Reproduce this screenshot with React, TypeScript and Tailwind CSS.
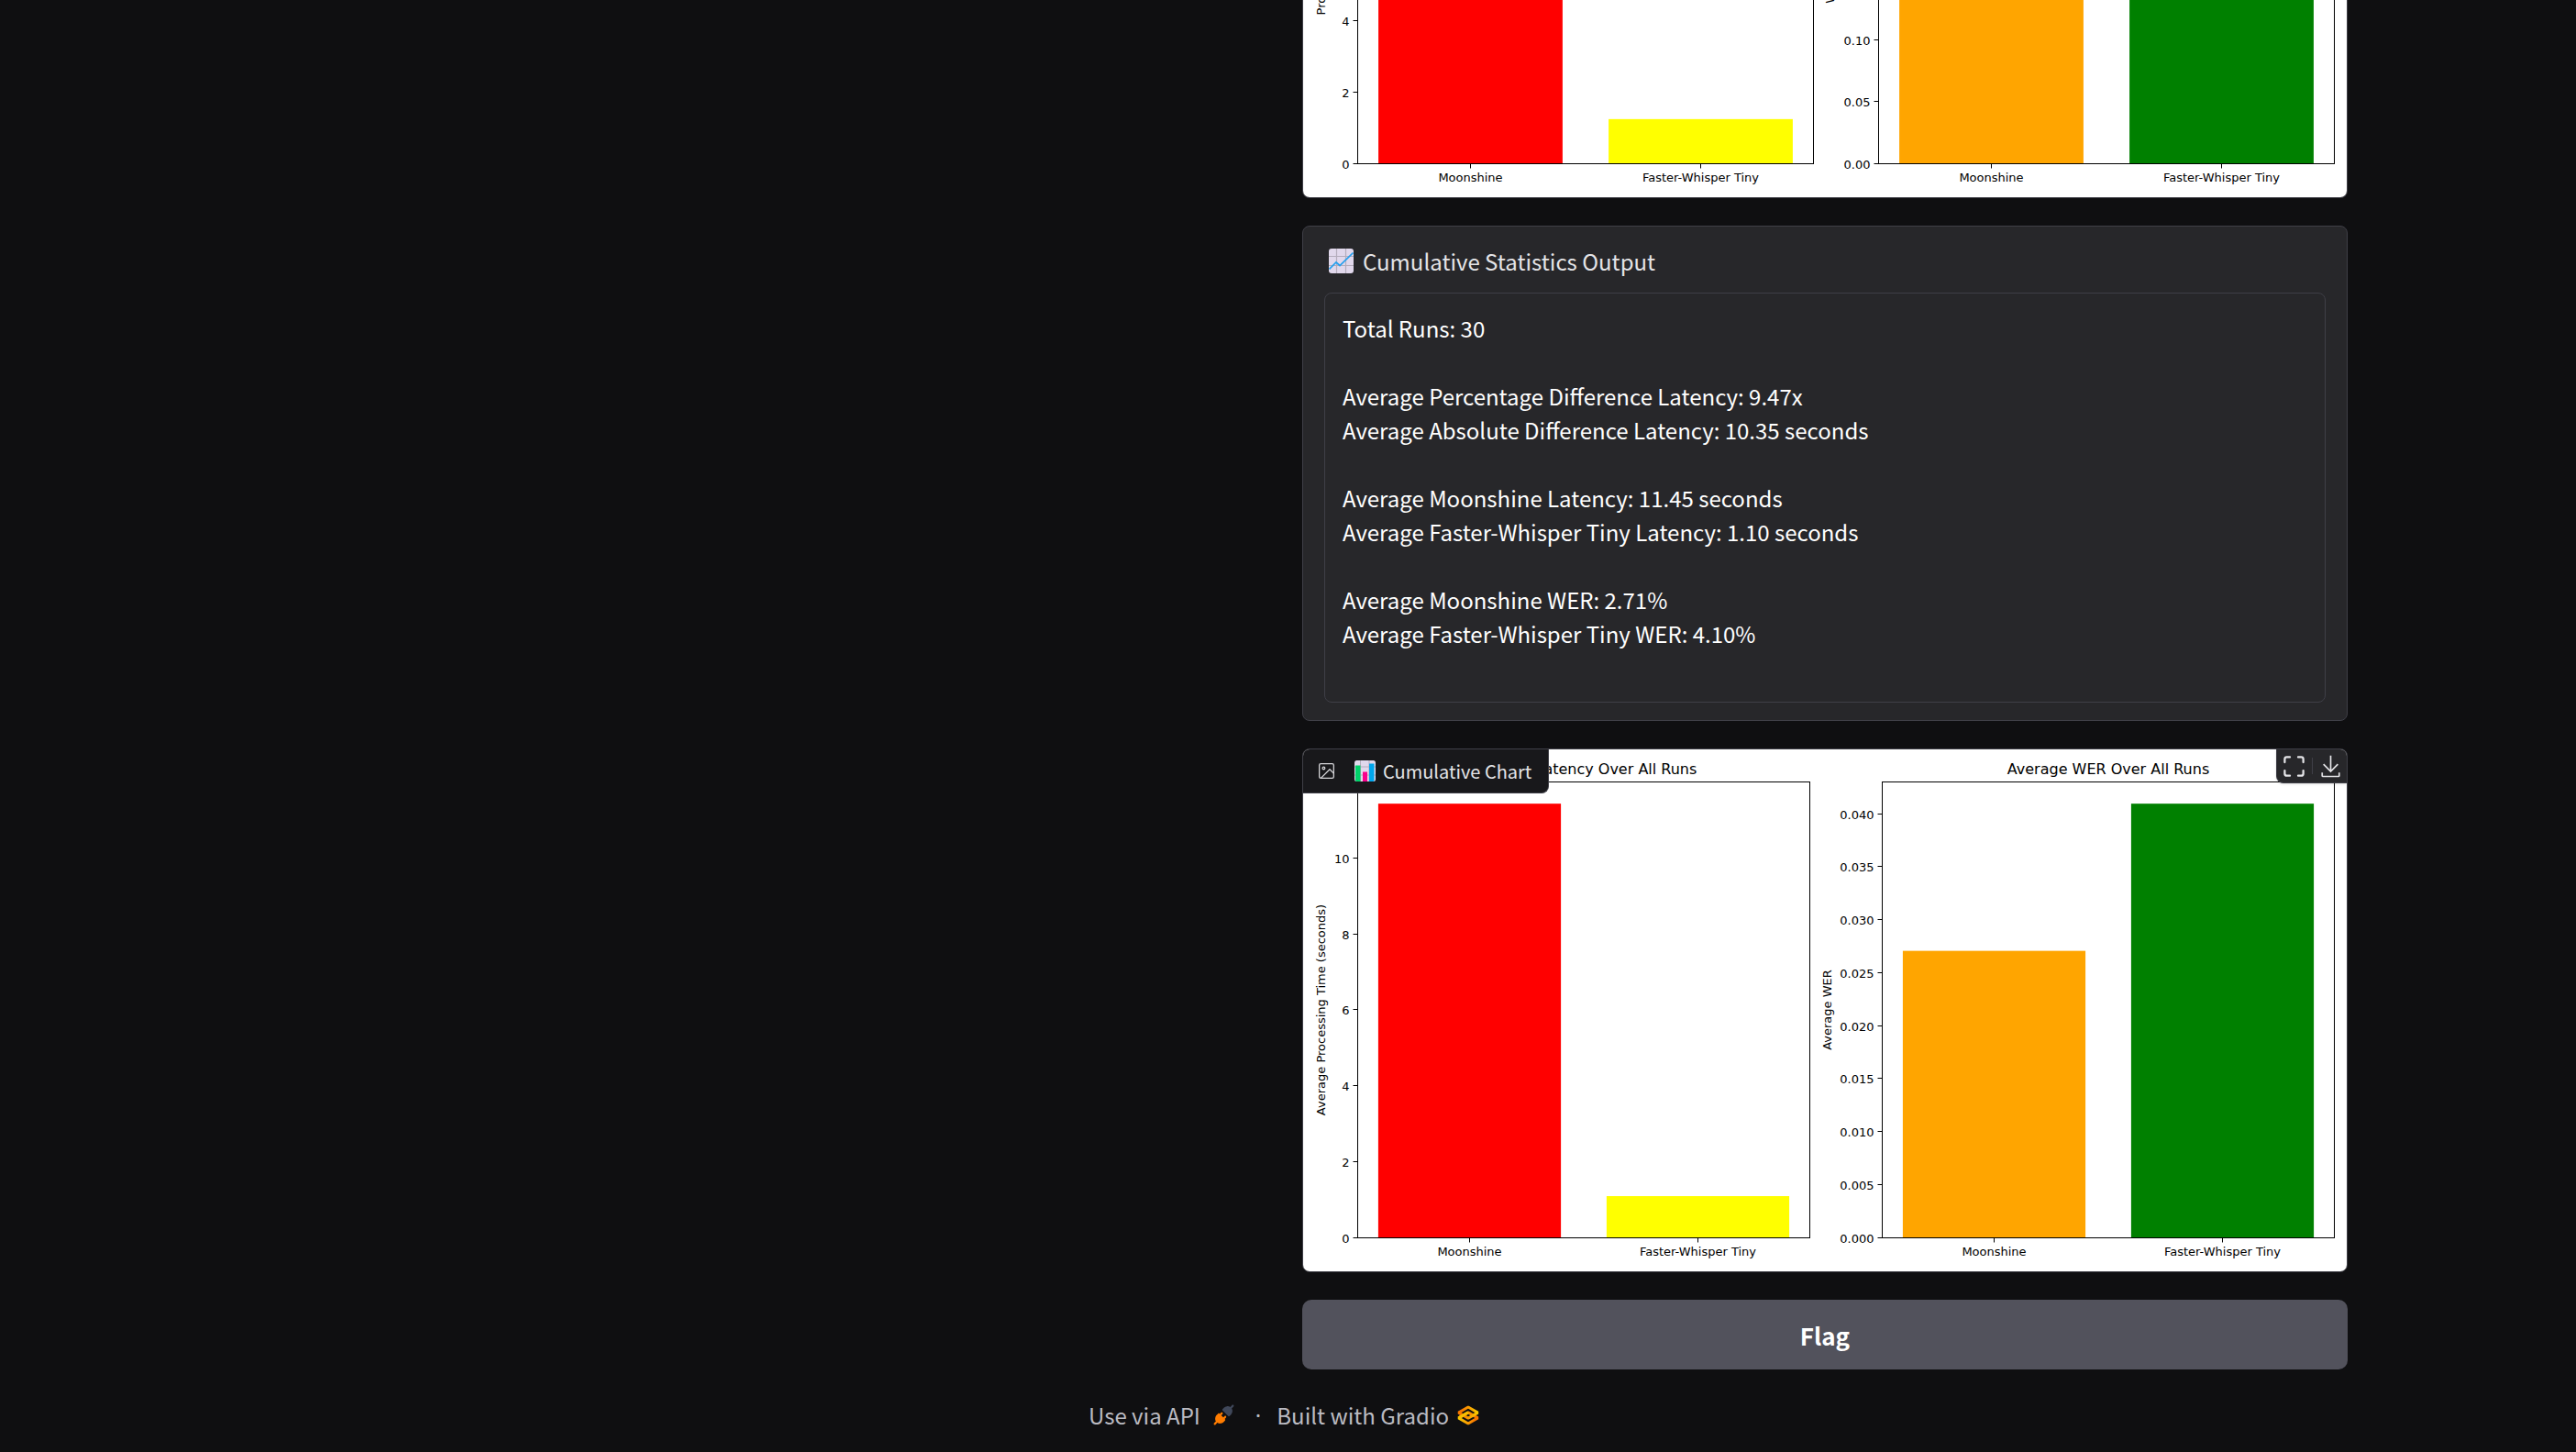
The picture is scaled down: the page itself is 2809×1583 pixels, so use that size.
import React from 'react';

type Bar = { value: number; color: string };

type Plot = {
  left: number;
  right: number;
  yLabel: string;
  yLabelX: number;
  title: string;
  step: number;
  ticks: number;
  digits: number;
  max: number;
  bars: [Bar, Bar];
};

const TOP = 35.5;
const BOTTOM = 532.5;
const CATEGORIES = ['Moonshine', 'Faster-Whisper Tiny'];

function BarPlot({ plot }: { plot: Plot }) {
  const width = plot.right - plot.left;
  const height = BOTTOM - TOP;
  const unit = width / 1.98;
  const y = (v: number) => BOTTOM - (v / plot.max) * height;
  const middle = (TOP + BOTTOM) / 2;
  return (
    <g fill="#000">
      <text x={plot.left + width / 2} y={27} textAnchor="middle" fontSize={16}>
        {plot.title}
      </text>
      <text
        transform={`translate(${plot.yLabelX} ${middle}) rotate(-90)`}
        textAnchor="middle"
        fontSize={13}
      >
        {plot.yLabel}
      </text>
      {plot.bars.map((bar, i) => (
        <rect
          key={i}
          x={plot.left + unit * (0.09 + i)}
          y={y(bar.value)}
          width={unit * 0.8}
          height={BOTTOM - y(bar.value)}
          fill={bar.color}
        />
      ))}
      {Array.from({ length: plot.ticks }, (_, i) => i * plot.step).map((v) => (
        <g key={v}>
          <path d={`M${plot.left - 5} ${Math.round(y(v)) - 0.5}H${plot.left}`} stroke="#000" />
          <text x={plot.left - 9} y={y(v) + 5} textAnchor="end" fontSize={13}>
            {v.toFixed(plot.digits)}
          </text>
        </g>
      ))}
      {CATEGORIES.map((name, i) => (
        <g key={name}>
          <path d={`M${Math.floor(plot.left + unit * (0.49 + i)) + 0.5} ${BOTTOM}v5`} stroke="#000" />
          <text x={plot.left + unit * (0.49 + i)} y={552} textAnchor="middle" fontSize={13}>
            {name}
          </text>
        </g>
      ))}
      <rect x={plot.left} y={TOP} width={width} height={height} fill="none" stroke="#000" />
    </g>
  );
}

function Chart({ label, plots }: { label: string; plots: Plot[] }) {
  return (
    <svg
      role="img"
      aria-label={label}
      viewBox="0 0 1138 569"
      className="block w-full shrink-0 bg-white font-['DejaVu_Sans',sans-serif]"
    >
      {plots.map((plot) => (
        <BarPlot key={plot.title} plot={plot} />
      ))}
    </svg>
  );
}

const runPlots: Plot[] = [
  {
    left: 59.5, right: 556.5, yLabel: 'Processing Time (seconds)', yLabelX: 24,
    title: 'Latency', step: 2, ticks: 7, digits: 0, max: 12.77,
    bars: [{ value: 12.16, color: '#ff0000' }, { value: 1.25, color: '#ffff00' }],
  },
  {
    left: 627.5, right: 1124.5, yLabel: 'Word Error Rate (WER)', yLabelX: 579,
    title: 'WER', step: 0.05, ticks: 8, digits: 2, max: 0.37,
    bars: [{ value: 0.3, color: '#ffa500' }, { value: 0.35, color: '#008000' }],
  },
];

const cumulativePlots: Plot[] = [
  {
    left: 59.5, right: 552.5, yLabel: 'Average Processing Time (seconds)', yLabelX: 24,
    title: 'Average Latency Over All Runs', step: 2, ticks: 6, digits: 0, max: 12.0225,
    bars: [{ value: 11.45, color: '#ff0000' }, { value: 1.1, color: '#ffff00' }],
  },
  {
    left: 631.5, right: 1124.5, yLabel: 'Average WER', yLabelX: 576,
    title: 'Average WER Over All Runs', step: 0.005, ticks: 9, digits: 3, max: 0.04305,
    bars: [{ value: 0.0271, color: '#ffa500' }, { value: 0.041, color: '#008000' }],
  },
];

function TrendIcon() {
  return (
    <svg viewBox="0 0 27 27" className="size-[27px]" aria-hidden="true">
      <rect width="27" height="27" rx="3" fill="#e1d8ec" />
      <path d="M8.5 0v27M18.5 0v27M0 8.5h27M0 18.5h27" stroke="#b4acbc" strokeWidth="1.2" />
      <path d="M.5 22.5 8 15l4 3.500L26.500 4.500" fill="none" stroke="#26a0ee" strokeWidth="1.700" />
    </svg>
  );
}

function BarsIcon() {
  return (
    <svg viewBox="0 0 23 23" className="size-[23px]" aria-hidden="true">
      <rect width="23" height="23" rx="2.500" fill="#e1d8ec" />
      <path d="M6.500 0v23M16 0v23M0 7h23M0 16h23" stroke="#b4acbc" />
      <path d="M1 5.500h5.500V23H2.500A1.500 1.500 0 0 1 1 21.500z" fill="#00d26a" />
      <path d="M9 12.500h5V23H9z" fill="#f8008c" />
      <path d="M16 3.500h5.500v18A1.500 1.500 0 0 1 20 23h-4z" fill="#00a6ed" />
    </svg>
  );
}

function ImageIcon() {
  return (
    <svg viewBox="0 0 24 24" className="size-[21px]" fill="none" stroke="#d4d4d8" strokeWidth="1.500" strokeLinecap="round" strokeLinejoin="round" aria-hidden="true">
      <rect x="3" y="3" width="18" height="18" rx="2" />
      <circle cx="8.500" cy="8.500" r="1.500" />
      <path d="m21 15-5-5L5 21" />
    </svg>
  );
}

function FullscreenIcon() {
  return (
    <svg viewBox="0 0 24 24" className="size-[27px]" fill="none" stroke="currentColor" strokeWidth="2" strokeLinecap="round" strokeLinejoin="round" aria-hidden="true">
      <path d="M8 3H5a2 2 0 0 0-2 2v3m18 0V5a2 2 0 0 0-2-2h-3m0 18h3a2 2 0 0 0 2-2v-3M3 16v3a2 2 0 0 0 2 2h3" />
    </svg>
  );
}

function DownloadIcon() {
  return (
    <svg viewBox="0 0 32 32" className="size-[27px]" fill="currentColor" aria-hidden="true">
      <path d="M26 24v4H6v-4H4v4a2 2 0 0 0 2 2h20a2 2 0 0 0 2-2v-4zm0-10l-1.410-1.410L17 20.170V2h-2v18.170l-7.590-7.580L6 14l10 10l10-10z" />
    </svg>
  );
}

function PlugIcon() {
  return (
    <svg viewBox="0 0 28 28" className="size-[23px]" aria-hidden="true">
      <path
        d="M26.9425 2.94265C27.4632 2.42195 27.4632 1.57773 26.9425 1.05703C26.4218 0.536329 25.5776 0.536329 25.0569 1.05703L22.5713 3.54256C21.1213 2.59333 19.5367 2.43378 18.1753 2.64006C16.5495 2.88638 15.1127 3.66838 14.3905 4.39053L12.3905 6.39053C12.1405 6.64058 12 6.97972 12 7.33334C12 7.68697 12.1405 8.0261 12.3905 8.27615L19.7239 15.6095C20.2446 16.1302 21.0888 16.1302 21.6095 15.6095L23.6095 13.6095C24.3316 12.8873 25.1136 11.4505 25.36 9.82475C25.5663 8.46312 25.4066 6.87853 24.4571 5.42858L26.9425 2.94265Z"
        fill="#3f4759"
      />
      <path
        d="M12.276 12.9426C12.7967 12.4219 12.7967 11.5777 12.276 11.057C11.7553 10.5363 10.9111 10.5363 10.3904 11.057L8.66651 12.7809L8.27615 12.3905C8.0261 12.1405 7.68697 12 7.33334 12C6.97972 12 6.64058 12.1405 6.39053 12.3905L4.39053 14.3905C3.66838 15.1127 2.88638 16.5495 2.64006 18.1753C2.43377 19.5367 2.59333 21.1214 3.54262 22.5714L1.05703 25.057C0.536329 25.5777 0.536329 26.4219 1.05703 26.9426C1.57773 27.4633 2.42195 27.4633 2.94265 26.9426L5.42817 24.4571C6.87835 25.4066 8.46315 25.5663 9.82475 25.36C11.4505 25.1136 12.8873 24.3316 13.6095 23.6095L15.6095 21.6095C16.1302 21.0888 16.1302 20.2446 15.6095 19.7239L15.2188 19.3332L16.9426 17.6093C17.4633 17.0886 17.4633 16.2444 16.9426 15.7237C16.4219 15.203 15.5777 15.203 15.057 15.7237L13.3332 17.4475L10.5521 14.6665L12.276 12.9426Z"
        fill="#ff7c00"
      />
    </svg>
  );
}

function GradioLogo() {
  return (
    <svg viewBox="0 0 576 576" className="size-[30px]" fill="none" strokeWidth="59" aria-hidden="true">
      <defs>
        <linearGradient id="lower" x1="60" y1="341" x2="429" y2="344" gradientUnits="userSpaceOnUse">
          <stop stopColor="#f9d100" />
          <stop offset="1" stopColor="#f97700" />
        </linearGradient>
        <linearGradient id="upper" x1="513" y1="231" x2="143" y2="231" gradientUnits="userSpaceOnUse">
          <stop stopColor="#f9d100" />
          <stop offset="1" stopColor="#f97700" />
        </linearGradient>
      </defs>
      <path d="M287.500 229L86 344.500L287.500 460L489 344.500L287.500 229Z" stroke="url(#lower)" strokeLinejoin="bevel" />
      <path d="M287.500 116L86 231.500L287.500 347L489 231.500L287.500 116Z" stroke="url(#upper)" strokeLinejoin="bevel" />
      <path d="M86 344L288 229" stroke="#f9c000" strokeLinejoin="bevel" />
    </svg>
  );
}

const statistics = `Total Runs: 30

Average Percentage Difference Latency: 9.47x
Average Absolute Difference Latency: 10.35 seconds

Average Moonshine Latency: 11.45 seconds
Average Faster-Whisper Tiny Latency: 1.10 seconds

Average Moonshine WER: 2.71%
Average Faster-Whisper Tiny WER: 4.10%`;

export default function App() {
  return (
    <div className="min-h-screen bg-[#0f0f11] font-['Noto_Sans_CJK_SC','Noto_Sans',sans-serif] text-2xl leading-[37px] text-zinc-100">
      <main className="grid grid-cols-2 gap-[31px] px-[249px]">
        <div />
        <div className="flex flex-col gap-[30px]">
          <div className="flex h-[216px] items-end overflow-hidden rounded-b-lg border border-t-0 border-zinc-700">
            <Chart label="Latency and WER" plots={runPlots} />
          </div>

          <section className="rounded-lg border border-zinc-700 bg-zinc-800 px-[23px] pt-[19px] pb-[19px]">
            <label htmlFor="statistics" className="mb-4 flex items-center gap-[10px] pl-[5px] text-zinc-200">
              <TrendIcon />
              Cumulative Statistics Output
            </label>
            <textarea
              id="statistics"
              readOnly
              rows={11}
              defaultValue={statistics}
              className="block w-full resize-none overflow-hidden rounded-lg border border-zinc-700 bg-zinc-800 px-[19px] py-[19px] text-white outline-none"
            />
          </section>

          <figure className="relative overflow-hidden rounded-lg border border-zinc-700">
            <Chart label="Cumulative Chart" plots={cumulativePlots} />
            <figcaption className="absolute top-0 left-0 flex h-12 items-center rounded-br-lg border-r border-b border-zinc-700 bg-zinc-900 pr-[18px] pl-[15px] text-xl text-zinc-200">
              <ImageIcon />
              <span className="ml-5 flex items-center gap-2">
                <BarsIcon />
                Cumulative Chart
              </span>
            </figcaption>
            <div className="absolute top-0 right-0 flex h-[37px] items-center gap-1.5 rounded-bl-lg border-b border-l border-zinc-700 bg-zinc-800 pr-1 pl-[5px] text-zinc-200 shadow-sm">
              <button type="button" aria-label="View in full screen">
                <FullscreenIcon />
              </button>
              <span className="h-[18px] w-px bg-zinc-700" />
              <button type="button" aria-label="Download">
                <DownloadIcon />
              </button>
            </div>
          </figure>

          <button type="button" className="h-[76px] rounded-[10px] bg-zinc-600 text-[26px] font-bold text-white">
            Flag
          </button>
        </div>
      </main>

      <footer className="mt-[31px] flex items-center justify-center text-[#bbbbc2]">
        <button type="button" className="flex items-center gap-3.5">
          Use via API
          <PlugIcon />
        </button>
        <span className="mr-[17px] ml-[23px] font-['Noto_Sans',sans-serif]">·</span>
        <a href="https://gradio.app" className="mr-1.5 flex items-center gap-1.5">
          Built with Gradio
          <GradioLogo />
        </a>
      </footer>
    </div>
  );
}
